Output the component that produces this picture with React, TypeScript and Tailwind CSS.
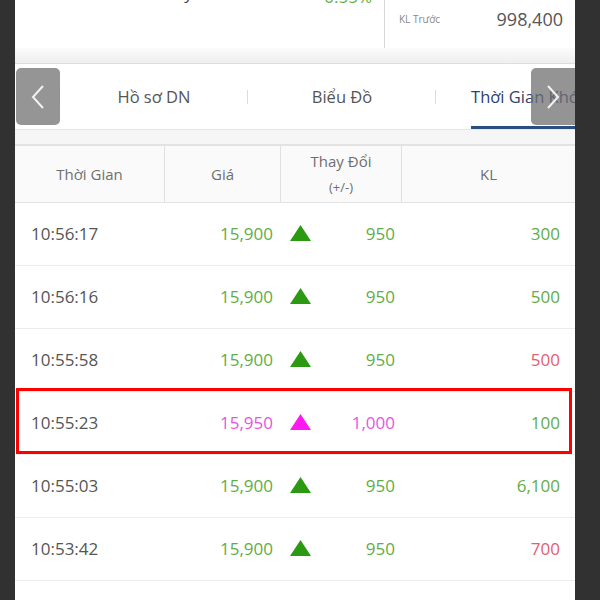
import React from "react";

type Row = {
  time: string;
  price: string;
  change: string;
  vol: string;
  tone: "up" | "ceil";
  volTone: "green" | "red";
};

const rows: Row[] = [
  { time: "10:56:17", price: "15,900", change: "950", vol: "300", tone: "up", volTone: "green" },
  { time: "10:56:16", price: "15,900", change: "950", vol: "500", tone: "up", volTone: "green" },
  { time: "10:55:58", price: "15,900", change: "950", vol: "500", tone: "up", volTone: "red" },
  { time: "10:55:23", price: "15,950", change: "1,000", vol: "100", tone: "ceil", volTone: "green" },
  { time: "10:55:03", price: "15,900", change: "950", vol: "6,100", tone: "up", volTone: "green" },
  { time: "10:53:42", price: "15,900", change: "950", vol: "700", tone: "up", volTone: "red" },
  { time: "10:53:40", price: "15,900", change: "950", vol: "200", tone: "up", volTone: "green" },
];

function Triangle({ color }: { color: string }) {
  return (
    <svg width="21" height="16" viewBox="0 0 21 16">
      <polygon points="10.5,0 21,16 0,16" fill={color} />
    </svg>
  );
}

export default function App() {
  return (
    <div
      className="w-[600px] h-[600px] bg-[#313131] overflow-hidden flex"
      style={{ fontFamily: '"Open Sans", "Noto Sans", sans-serif' }}
    >
      <div className="ml-[15px] w-[560px] bg-white flex flex-col">
        {/* --- TOP SUMMARY (cut off) --- */}
        <div className="h-[48px] flex shrink-0">
          <div className="w-[370px] border-r border-[#d6d6d6] relative overflow-hidden">
            <div className="-mt-[19px] flex items-center h-[24px] pl-[140px] text-[17px]">
              <span className="text-[#444]">Thay đổi</span>
              <span className="ml-auto mr-[12px] mt-[7px] text-[#5fae3f]">0.55%</span>
            </div>
          </div>
          <div className="flex-1 flex items-center pl-[14px] pr-[12px] -mt-[10px]">
            <span className="text-[10px] text-[#888]">KL Trước</span>
            <span className="ml-auto text-[18px] text-[#555]">998,400</span>
          </div>
        </div>
        <div className="h-[16px] shrink-0 bg-gradient-to-b from-[#fbfbfb] to-[#efefef] border-b border-[#dedede]" />

        {/* --- TABS --- */}
        <div className="h-[66px] shrink-0 relative overflow-hidden border-b border-[#e6e6e6]">
          <div className="flex h-full -ml-[143px]">
            {["Giao Dịch", "Hồ sơ DN", "Biểu Đồ", "Thời Gian Khớp"].map((t, i) => (
              <div key={t} className="w-[188px] shrink-0 h-full relative flex items-center justify-center">
                <span
                  className={
                    i === 3
                      ? "text-[16.5px] text-[#2c4372] h-full flex items-center border-b-[3px] border-[#2b4f82] pt-[5px] whitespace-nowrap"
                      : "text-[16.5px] text-[#555] whitespace-nowrap pt-[2px]"
                  }
                >
                  {t}
                </span>
                {i < 3 && <span className="absolute right-0 top-[26px] h-[14px] w-px bg-[#dcdcdc]" />}
              </div>
            ))}
          </div>
          <button className="absolute left-[1px] top-[4px] w-[44px] h-[57px] rounded-[5px] bg-[#8a8a8a]/90 flex items-center justify-center">
            <svg width="16" height="26" viewBox="0 0 16 26" fill="none" stroke="#f2f2f2" strokeWidth="2">
              <polyline points="13,2 3,13 13,24" />
            </svg>
          </button>
          <button className="absolute right-0 top-[4px] w-[44px] h-[57px] rounded-l-[5px] bg-[#707070]/75 flex items-center justify-center">
            <svg width="16" height="26" viewBox="0 0 16 26" fill="none" stroke="#f2f2f2" strokeWidth="2">
              <polyline points="3,2 13,13 3,24" />
            </svg>
          </button>
        </div>
        <div className="h-[16px] shrink-0 bg-[#f6f6f6] border-b-2 border-[#e3e3e3]" />

        {/* --- TABLE HEADER --- */}
        <div className="h-[57px] shrink-0 flex bg-[#fafafa] border-b border-[#e3e3e3] text-[15px] text-[#6f6f6f]">
          <div className="w-[150px] flex items-center justify-center border-r border-[#e0e0e0]">Thời Gian</div>
          <div className="w-[116px] flex items-center justify-center border-r border-[#e0e0e0]">Giá</div>
          <div className="w-[121px] flex flex-col items-center justify-center border-r border-[#e0e0e0] leading-[26px]">
            <span>Thay Đổi</span>
            <span className="text-[13px]">(+/-)</span>
          </div>
          <div className="flex-1 flex items-center justify-center">KL</div>
        </div>

        {/* --- ROWS --- */}
        {rows.map((r, i) => {
          const main = r.tone === "ceil" ? "text-[#e655e0]" : "text-[#62ad45]";
          const tri = r.tone === "ceil" ? "#ff19f0" : "#2b9a12";
          const vol = r.volTone === "red" ? "text-[#e2606e]" : "text-[#62ad45]";
          return (
            <div key={i} className="h-[63px] shrink-0 flex items-center border-b border-[#ececec] text-[17px] relative">
              <div className="w-[150px] pl-[16px] text-[#555]">{r.time}</div>
              <div className={`w-[108px] text-right ${main}`}>{r.price}</div>
              <div className="w-[122px] flex items-center">
                <span className="ml-[17px] mt-[-2px]">
                  <Triangle color={tri} />
                </span>
                <span className={`ml-auto ${main}`}>{r.change}</span>
              </div>
              <div className={`ml-auto pr-[15px] ${vol}`}>{r.vol}</div>
              {i === 3 && (
                <div className="absolute left-[1px] right-[3px] -top-[4px] bottom-0 border-[3px] border-[#ff0000] pointer-events-none" />
              )}
            </div>
          );
        })}
      </div>
    </div>
  );
}
